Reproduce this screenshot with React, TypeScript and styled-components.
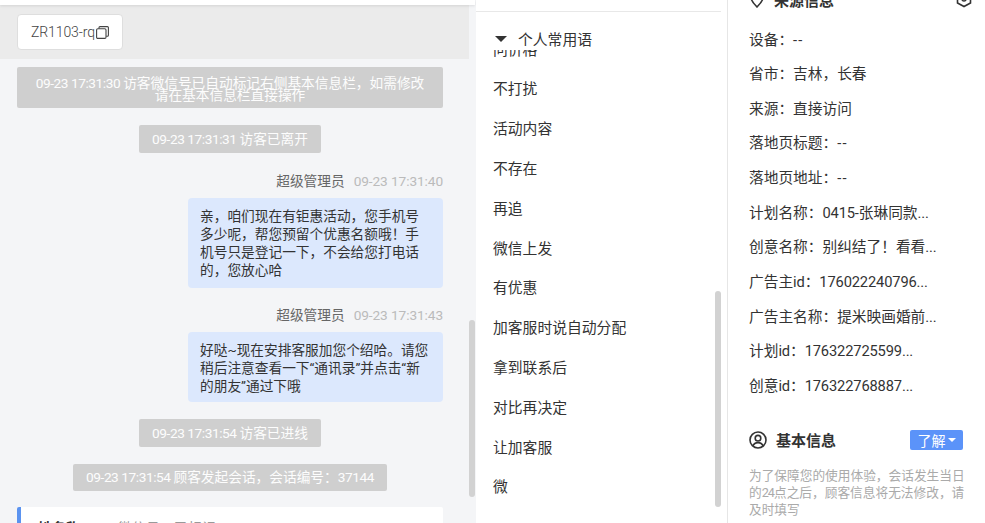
import React from "react";
import styled, { createGlobalStyle } from "styled-components";

const Global = createGlobalStyle`
  html, body { margin: 0; padding: 0; background: #fff; }
  body { font-family: Roboto, "Noto Sans CJK SC", sans-serif; font-weight: 400; overflow: hidden; }
  * { box-sizing: border-box; }
`;

const Page = styled.div`
  width: 985px;
  height: 523px;
  display: grid;
  grid-template-columns: 476px 251px 258px;
  overflow: hidden;
`;

const Latin = styled.span<{ $dashes?: boolean }>`
  font-family: Roboto, sans-serif;
  font-weight: 400;
  letter-spacing: ${(p) => (p.$dashes ? "1.2px" : "var(--track, -0.45px)")};
`;

const Mixed = ({ children }: { children: string }) => (
  <>
    {children.split(/([\x20-\x7e]+)/).map((part, i) =>
      i % 2 === 1 ? (
        <Latin key={i} $dashes={part === "--"}>
          {part}
        </Latin>
      ) : (
        part
      )
    )}
  </>
);

const ChatColumn = styled.section`
  position: relative;
  height: 523px;
  background: #f4f5f7;
  overflow: hidden;
`;

const TopBar = styled.div`
  height: 5px;
  width: 475px;
  background: #fff;
  box-shadow: 0 1px 3px rgba(0, 0, 0, 0.1);
  position: relative;
`;

const TagBand = styled.div`
  width: 469px;
  height: 54px;
  background: #ebebeb;
  padding: 9px 17px;
`;

const TagChip = styled.div`
  width: 106px;
  height: 36px;
  background: #fff;
  border: 1px solid #dedede;
  border-radius: 4px;
  display: flex;
  align-items: center;
  padding-left: 13px;
  font-size: 14px;
  font-weight: 300;
  letter-spacing: -0.1px;
  color: #444;
  svg { display: block; flex: none; margin-left: 1px; }
`;

const Thread = styled.div`
  width: 469px;
  padding: 8px 26px 0 17px;
  display: flex;
  flex-direction: column;
  align-items: stretch;
`;

const SystemNote = styled.div<{ $mt: number; $w: number; $h: number; $lh: number }>`
  align-self: center;
  margin-top: ${(p) => p.$mt}px;
  width: ${(p) => p.$w}px;
  height: ${(p) => p.$h}px;
  background: #cfcfcf;
  border-radius: 2px;
  color: #fdfdfd;
  font-size: 13.7px;
  line-height: ${(p) => p.$lh}px;
  text-align: center;
  padding-top: ${(p) => (p.$lh === 12 ? 10 : 0)}px;
`;

const SenderLine = styled.div<{ $mt: number }>`
  --track: -0.1px;
  margin-top: ${(p) => p.$mt}px;
  height: 18px;
  line-height: 18px;
  text-align: right;
  font-size: 13.7px;
  color: #666;
`;

const SenderTime = styled.span`
  color: #bbb;
  margin-left: 9px;
`;

const Bubble = styled.div<{ $h: number }>`
  align-self: flex-end;
  margin-top: 8px;
  width: 255px;
  height: ${(p) => p.$h}px;
  padding: 9px 12px 0 12px;
  background: #dce8fd;
  border-radius: 4px;
  font-size: 13.7px;
  line-height: 18px;
  color: #333;
`;

const QuoteCard = styled.div`
  margin-top: 16px;
  height: 60px;
  background: #fff;
  border-left: 4px solid #5b93f0;
  border-radius: 2px;
  padding: 12px 0 0 17px;
  font-size: 14px;
  line-height: 18px;
  color: #999;
  strong { font-weight: 700; margin-right: 38px; color: #333; }
`;

const ScrollThumb = styled.div<{ $left: number; $top: number; $h: number }>`
  position: absolute;
  left: ${(p) => p.$left}px;
  top: ${(p) => p.$top}px;
  width: 6px;
  height: ${(p) => p.$h}px;
  border-radius: 3px;
  background: #d2d2d2;
`;

const PhraseColumn = styled.section`
  position: relative;
  height: 523px;
  background: #fff;
  overflow: hidden;
`;

const PhraseRule = styled.div`
  height: 12px;
  width: 245px;
  border-bottom: 1px solid #e8e8e8;
`;

const PhraseHeader = styled.div`
  height: 38px;
  display: flex;
  align-items: center;
  padding-left: 19px;
  gap: 11px;
  padding-top: 15px;
  font-size: 14.8px;
  color: #333;
  background: #fff;
  position: relative;
  z-index: 1;
`;

const Caret = styled.i`
  width: 0;
  height: 0;
  border-left: 6px solid transparent;
  border-right: 6px solid transparent;
  border-top: 6px solid #333;
`;

const PhraseList = styled.ul`
  list-style: none;
  margin: -19.4px 0 0;
  padding: 0 0 0 17px;
`;

const PhraseItem = styled.li`
  height: 39.8px;
  line-height: 39.8px;
  font-size: 14.8px;
  color: #333;
`;

const InfoColumn = styled.aside`
  height: 523px;
  border-left: 1px solid #e6e6e6;
  background: #fff;
  overflow: hidden;
  padding: 0 22px 0 21px;
`;

const SectionHead = styled.div<{ $mt: number }>`
  display: flex;
  align-items: center;
  margin-top: ${(p) => p.$mt}px;
  height: 20px;
  font-size: 15px;
  font-weight: 700;
  color: #333;
  svg { flex: none; display: block; }
  span { margin-left: 9px; flex: 1; }
`;

const ClippedIcon = styled.div`
  margin-right: -9px;
`;

const InfoRow = styled.div`
  --track: -0.15px;
  height: 34.65px;
  line-height: 34.65px;
  font-size: 14.7px;
  color: #333;
  white-space: nowrap;
`;

const InfoRows = styled.div`
  margin-top: 13.5px;
`;

const LearnButton = styled.div`
  width: 53px;
  height: 20px;
  background: #5b93f9;
  border-radius: 2px;
  color: #fff;
  font-size: 14px;
  display: flex;
  align-items: center;
  justify-content: center;
  gap: 2px;
  font-weight: 400;
  i {
    width: 0;
    height: 0;
    border-left: 4px solid transparent;
    border-right: 4px solid transparent;
    border-top: 4px solid #fff;
  }
`;

const Notice = styled.p`
  --track: -1px;
  margin: 17px -8px 0 0;
  font-size: 12.7px;
  line-height: 17.3px;
  color: #aaa;
`;

const PinIcon = () => (
  <svg width="16" height="18" viewBox="0 0 16 18" fill="none" stroke="#333" strokeWidth="1.6">
    <path d="M8 17C5 14 2 11 2 7.5a6 6 0 0 1 12 0C14 11 11 14 8 17Z" />
    <circle cx="8" cy="7.5" r="1.8" />
  </svg>
);

const HexIcon = () => (
  <svg width="16" height="18" viewBox="0 0 16 18" fill="none" stroke="#333" strokeWidth="1.6">
    <path d="M8 1.5 14.5 5v8L8 16.5 1.5 13V5Z" />
    <circle cx="8" cy="9" r="2" />
  </svg>
);

const UserCircleIcon = () => (
  <svg width="18" height="18" viewBox="0 0 18 18" fill="none" stroke="#333" strokeWidth="1.6">
    <circle cx="9" cy="9" r="8" />
    <circle cx="9" cy="7.2" r="2.8" />
    <path d="M3.8 15c1-2.4 3-3.4 5.2-3.4s4.2 1 5.2 3.4" />
  </svg>
);

const CopyIcon = () => (
  <svg width="13" height="13" viewBox="0 0 13 13" fill="none" stroke="#444" strokeWidth="1.1">
    <rect x="0.6" y="2.8" width="9.4" height="9.6" rx="1.2" />
    <path d="M3 2.6V1.6A1 1 0 0 1 4 .6h7.4a1 1 0 0 1 1 1v7.6a1 1 0 0 1-1 1h-1.2" />
  </svg>
);

const phrases = ["问价格", "不打扰", "活动内容", "不存在", "再追", "微信上发", "有优惠", "加客服时说自动分配", "拿到联系后", "对比再决定", "让加客服", "微"];

const infoRows = [
  "设备：--",
  "省市：吉林，长春",
  "来源：直接访问",
  "落地页标题：--",
  "落地页地址：--",
  "计划名称：0415-张琳同款...",
  "创意名称：别纠结了！看看...",
  "广告主id：176022240796...",
  "广告主名称：提米映画婚前...",
  "计划id：176322725599...",
  "创意id：176322768887...",
];

export default function App() {
  return (
    <Page>
      <Global />
      <ChatColumn>
        <TopBar />
        <TagBand>
          <TagChip>
            ZR1103-rq
            <CopyIcon />
          </TagChip>
        </TagBand>
        <Thread>
          <SystemNote $mt={0} $w={426} $h={41} $lh={12}>
            <Mixed>09-23 17:31:30 访客微信号已自动标记右侧基本信息栏，如需修改</Mixed>
            <br />
            请在基本信息栏直接操作
          </SystemNote>
          <SystemNote $mt={17} $w={182} $h={28} $lh={28}>
            <Mixed>09-23 17:31:31 访客已离开</Mixed>
          </SystemNote>
          <SenderLine $mt={19}>
            超级管理员<SenderTime><Latin>09-23 17:31:40</Latin></SenderTime>
          </SenderLine>
          <Bubble $h={90}>亲，咱们现在有钜惠活动，您手机号多少呢，帮您预留个优惠名额哦！手机号只是登记一下，不会给您打电话的，您放心哈</Bubble>
          <SenderLine $mt={18}>
            超级管理员<SenderTime><Latin>09-23 17:31:43</Latin></SenderTime>
          </SenderLine>
          <Bubble $h={70}>好哒~现在安排客服加您个绍哈。请您稍后注意查看一下“通讯录”并点击“新的朋友”通过下哦</Bubble>
          <SystemNote $mt={17} $w={182} $h={28} $lh={28}>
            <Mixed>09-23 17:31:54 访客已进线</Mixed>
          </SystemNote>
          <SystemNote $mt={17} $w={314} $h={27} $lh={27}>
            <Mixed>09-23 17:31:54 顾客发起会话，会话编号：37144</Mixed>
          </SystemNote>
          <QuoteCard>
            <strong>姓名称</strong>微信号：已标记
          </QuoteCard>
        </Thread>
        <ScrollThumb $left={469} $top={320} $h={177} />
      </ChatColumn>
      <PhraseColumn>
        <PhraseRule />
        <PhraseHeader>
          <Caret />
          个人常用语
        </PhraseHeader>
        <PhraseList>
          {phrases.map((p) => (
            <PhraseItem key={p}>{p}</PhraseItem>
          ))}
        </PhraseList>
        <ScrollThumb $left={239} $top={291} $h={216} />
      </PhraseColumn>
      <InfoColumn>
        <SectionHead $mt={-11}>
          <PinIcon />
          <span>来源信息</span>
          <ClippedIcon>
            <HexIcon />
          </ClippedIcon>
        </SectionHead>
        <InfoRows>
          {infoRows.map((r) => (
            <InfoRow key={r}>
              <Mixed>{r}</Mixed>
            </InfoRow>
          ))}
        </InfoRows>
        <SectionHead $mt={26}>
          <UserCircleIcon />
          <span>基本信息</span>
          <LearnButton>
            了解<i />
          </LearnButton>
        </SectionHead>
        <Notice>
          <Mixed>为了保障您的使用体验，会话发生当日的24点之后，顾客信息将无法修改，请及时填写</Mixed>
        </Notice>
      </InfoColumn>
    </Page>
  );
}
